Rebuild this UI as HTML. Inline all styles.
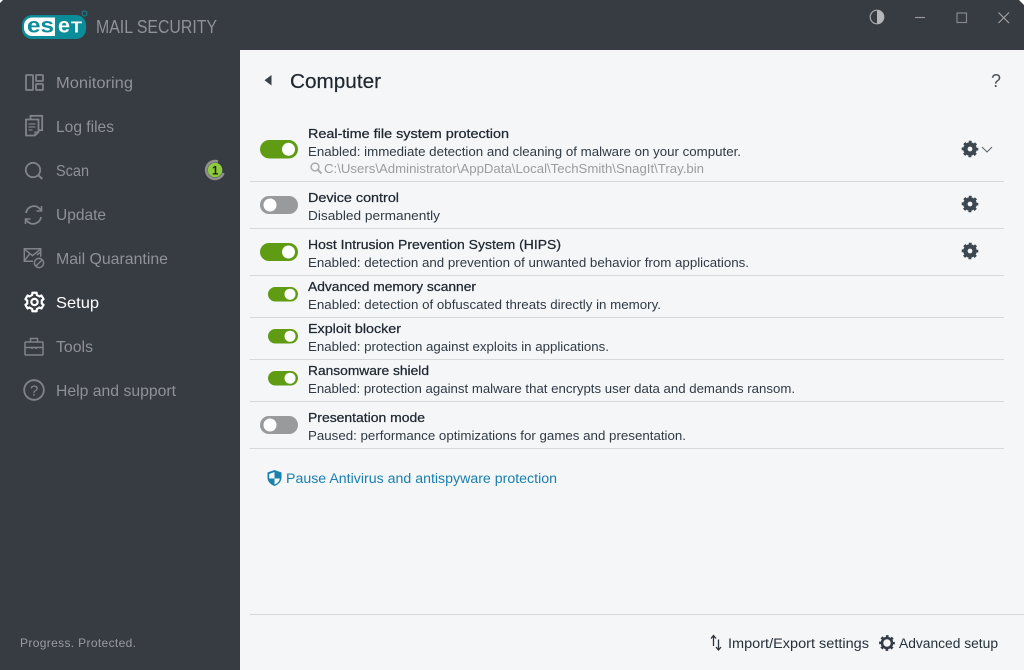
<!DOCTYPE html>
<html lang="en"><head><meta charset="utf-8"><title>ESET Mail Security</title>
<style>
html,body{margin:0;padding:0;width:1024px;height:670px;overflow:hidden;background:#f4f6f8}
svg{display:block}
text{font-family:"Liberation Sans",sans-serif;white-space:pre}
.n{font-size:16px;fill:#8f9296}
.t{font-size:13px;fill:#1f2730;font-weight:400;stroke:#1f2730;stroke-width:.25px}
.d{font-size:13px;fill:#303a44}
.i{fill:none;stroke:#808387;stroke-width:1.8}
.l{fill:#d6d8da}
</style></head><body>
<svg width="1024" height="670" viewBox="0 0 1024 670" xmlns="http://www.w3.org/2000/svg">
<defs>
<g id="gear">
<circle r="4.600" fill="none" stroke="#3d4750" stroke-width="4.400"/>
<circle r="7" fill="none" stroke="#3d4750" stroke-width="2.600" stroke-dasharray="2.750 2.750" stroke-dashoffset="1.370"/>
</g>
<path id="lobed" d="M-2.250-9.740L2.250-9.740L2.410-7.420L5.220-5.800L7.310-6.820L9.560-2.920L7.630-1.620L7.630 1.620L9.560 2.920L7.310 6.820L5.220 5.800L2.410 7.420L2.250 9.740L-2.250 9.740L-2.410 7.420L-5.220 5.800L-7.310 6.820L-9.560 2.920L-7.630 1.620L-7.630-1.620L-9.560-2.920L-7.310-6.820L-5.220-5.800L-2.410-7.420Z"/>
</defs>
<rect width="1024" height="670" fill="#f4f6f8"/>
<rect x="0" y="0" width="1024" height="50" fill="#373b42"/>
<rect x="0" y="0" width="240" height="670" fill="#373b42"/>
<path d="M0 0h3L0 3zM1024 0h-5l5 5z" fill="#fff"/>

<!-- logo -->
<rect x="22" y="15" width="64" height="24" rx="10" fill="#0b8d99"/>
<path d="M32 17.500H55V36H32a8 8 0 0 1-8-8v-2.500a8 8 0 0 1 8-8z" fill="#fff"/>
<text x="27" y="32.500" font-size="21" font-weight="700" fill="#0b8d99" textLength="27" lengthAdjust="spacingAndGlyphs">es</text>
<text x="58" y="32.500" font-size="21" font-weight="700" fill="#fff" textLength="12" lengthAdjust="spacingAndGlyphs">e</text>
<text x="71" y="32.500" font-size="16" font-weight="700" fill="#fff" textLength="11" lengthAdjust="spacingAndGlyphs">T</text>
<circle cx="84.500" cy="13.500" r="2.500" fill="none" stroke="#0b8d99" stroke-width="1"/>
<text x="96" y="33" font-size="18" fill="#8f9296" textLength="121" lengthAdjust="spacingAndGlyphs">MAIL SECURITY</text>

<!-- nav text -->
<text class="n" x="56" y="88" textLength="77" lengthAdjust="spacingAndGlyphs">Monitoring</text>
<text class="n" x="56" y="132" textLength="58" lengthAdjust="spacingAndGlyphs">Log files</text>
<text class="n" x="56" y="176" textLength="33" lengthAdjust="spacingAndGlyphs">Scan</text>
<text class="n" x="56" y="220" textLength="50" lengthAdjust="spacingAndGlyphs">Update</text>
<text class="n" x="56" y="264" textLength="112" lengthAdjust="spacingAndGlyphs">Mail Quarantine</text>
<text class="n" x="56" y="308" textLength="43" lengthAdjust="spacingAndGlyphs" style="fill:#fff">Setup</text>
<text class="n" x="56" y="352" textLength="37" lengthAdjust="spacingAndGlyphs">Tools</text>
<text class="n" x="56" y="396" textLength="120" lengthAdjust="spacingAndGlyphs">Help and support</text>
<text x="20" y="647" font-size="12" fill="#9a9da0" textLength="116" lengthAdjust="spacing">Progress. Protected.</text>

<!-- nav icons -->
<g class="i">
<rect x="26" y="75" width="7" height="15" rx=".8"/>
<rect x="36" y="75" width="7" height="6" rx=".8"/>
<rect x="36" y="84" width="7" height="6" rx=".8"/>
<path d="M30.500 119v-3.200h11.700v14.400h-3.500"/>
<path d="M26 119.500h12.500v12.500l-3.500 3.500h-9z"/>
<path d="M35 135.500v-3.500h3.500" stroke-width="1.200"/>
<path d="M28.500 124h7M28.500 127h7M28.500 130h4" stroke-width="1.200"/>
<circle cx="33" cy="170" r="7.200"/>
<path d="M38.300 175.300l4 3.600" stroke-width="2"/>
<path d="M26 213a8 8 0 0 1 13.500-4.500l2 2"/>
<path d="M41.500 206v5h-5" stroke-width="1.600"/>
<path d="M41 217a8 8 0 0 1-13.500 4.500l-2-2"/>
<path d="M25.500 224v-5h5" stroke-width="1.600"/>
<g stroke-width="1.500">
<path d="M33 261.200h-8.700v-12.400h16.400v8"/>
<path d="M24.500 249.200l8 6.500 8-6.500M24.500 260.500l5.500-7M40 252.500l-3 2.500"/>
<circle cx="39" cy="263" r="4.600"/>
<path d="M36 266l6-6"/>
</g>
<g stroke-width="1.500">
<rect x="25" y="342" width="18" height="13" rx=".8"/>
<path d="M30.500 342v-3.500h7v3.500M25 347.500h18M32 347.500v1.500M36 347.500v1.500"/>
</g>
<circle cx="34" cy="390" r="9.800"/>
</g>
<text x="30" y="395.500" font-size="15" fill="#85888c">?</text>
<g transform="translate(34.500 302) scale(.95)">
<use href="#lobed" fill="none" stroke="#fff" stroke-width="2.300" stroke-linejoin="round"/>
<circle r="3.300" fill="none" stroke="#fff" stroke-width="2.300"/>
</g>

<!-- badge -->
<path d="M223.400 173A8.900 8.900 0 1 1 218 161.600" fill="none" stroke="#8d8f90" stroke-width="2.600"/>
<circle cx="215" cy="170" r="7.300" fill="#8fcb3c"/>
<text x="212" y="174.500" font-size="11.500" font-weight="700" fill="#1a1f10">1</text>

<!-- window controls -->
<circle cx="877" cy="17" r="6.800" fill="none" stroke="#a8aaad" stroke-width="1.200"/>
<path d="M877 10.200a6.800 6.800 0 0 1 0 13.600z" fill="#b5b7ba"/>
<path d="M915 17.500h10" stroke="#96989b" stroke-width="1.200"/>
<rect x="957" y="13" width="9.500" height="9.500" fill="none" stroke="#85888c" stroke-width="1.200"/>
<path d="M998.500 12.500l10.500 10.500M1009 12.500l-10.500 10.500" stroke="#a0a2a5" stroke-width="1.200" fill="none"/>

<!-- header -->
<path d="M271.500 75v10.500l-7-5.200z" fill="#3b4149"/>
<text x="290" y="88" font-size="20" fill="#1f2730" textLength="91" lengthAdjust="spacingAndGlyphs" style="stroke:#1f2730;stroke-width:.2px">Computer</text>
<text x="991" y="87" font-size="18" fill="#4a525a" textLength="10" lengthAdjust="spacingAndGlyphs">?</text>

<!-- rows -->
<text class="t" x="308" y="138" textLength="201" lengthAdjust="spacingAndGlyphs">Real-time file system protection</text>
<text class="d" x="308" y="156" textLength="433" lengthAdjust="spacingAndGlyphs">Enabled: immediate detection and cleaning of malware on your computer.</text>
<circle cx="315" cy="167" r="3.900" fill="none" stroke="#a9abad" stroke-width="1.500"/>
<path d="M318 170l3.500 3.500" stroke="#a9abad" stroke-width="2"/>
<text x="324" y="173" font-size="13" fill="#9a9c9f" textLength="380" lengthAdjust="spacingAndGlyphs">C:\Users\Administrator\AppData\Local\TechSmith\SnagIt\Tray.bin</text>
<rect class="l" x="250" y="181" width="754" height="1"/>
<text class="t" x="308" y="202" textLength="91" lengthAdjust="spacingAndGlyphs">Device control</text>
<text class="d" x="308" y="220" textLength="132" lengthAdjust="spacingAndGlyphs">Disabled permanently</text>
<rect class="l" x="250" y="228" width="754" height="1"/>
<text class="t" x="308" y="249" textLength="253" lengthAdjust="spacingAndGlyphs">Host Intrusion Prevention System (HIPS)</text>
<text class="d" x="308" y="267" textLength="441" lengthAdjust="spacingAndGlyphs">Enabled: detection and prevention of unwanted behavior from applications.</text>
<rect class="l" x="250" y="275" width="754" height="1"/>
<text class="t" x="308" y="291" textLength="168" lengthAdjust="spacingAndGlyphs">Advanced memory scanner</text>
<text class="d" x="308" y="309" textLength="353" lengthAdjust="spacingAndGlyphs">Enabled: detection of obfuscated threats directly in memory.</text>
<rect class="l" x="250" y="317" width="754" height="1"/>
<text class="t" x="308" y="333" textLength="93" lengthAdjust="spacingAndGlyphs">Exploit blocker</text>
<text class="d" x="308" y="351" textLength="301" lengthAdjust="spacingAndGlyphs">Enabled: protection against exploits in applications.</text>
<rect class="l" x="250" y="359" width="754" height="1"/>
<text class="t" x="308" y="375" textLength="121" lengthAdjust="spacingAndGlyphs">Ransomware shield</text>
<text class="d" x="308" y="393" textLength="487" lengthAdjust="spacingAndGlyphs">Enabled: protection against malware that encrypts user data and demands ransom.</text>
<rect class="l" x="250" y="401" width="754" height="1"/>
<text class="t" x="308" y="422" textLength="117" lengthAdjust="spacingAndGlyphs">Presentation mode</text>
<text class="d" x="308" y="440" textLength="378" lengthAdjust="spacingAndGlyphs">Paused: performance optimizations for games and presentation.</text>
<rect class="l" x="250" y="448" width="754" height="1"/>

<!-- toggles -->
<rect x="260" y="140" width="38" height="18.500" rx="9.250" fill="#5f9c14"/><circle cx="288.500" cy="149.300" r="6.500" fill="#fff"/>
<rect x="260" y="196" width="38" height="18" rx="9" fill="#999a9c"/><circle cx="270" cy="205" r="6.500" fill="#fff"/>
<rect x="260" y="243" width="38" height="18" rx="9" fill="#5f9c14"/><circle cx="288.500" cy="252" r="6.500" fill="#fff"/>
<rect x="268" y="287" width="30" height="14.500" rx="7.250" fill="#5f9c14"/><circle cx="290" cy="294.200" r="5.500" fill="#fff"/>
<rect x="268" y="329" width="30" height="14.500" rx="7.250" fill="#5f9c14"/><circle cx="290" cy="336.200" r="5.500" fill="#fff"/>
<rect x="268" y="371" width="30" height="14.500" rx="7.250" fill="#5f9c14"/><circle cx="290" cy="378.200" r="5.500" fill="#fff"/>
<rect x="260" y="416" width="38" height="18" rx="9" fill="#999a9c"/><circle cx="270" cy="425" r="6.500" fill="#fff"/>

<!-- gears -->
<use href="#gear" transform="translate(970 149)"/>
<use href="#gear" transform="translate(970 204)"/>
<use href="#gear" transform="translate(970 251)"/>
<path d="M982 147l5 5 5-5" fill="none" stroke="#5b646c" stroke-width="1"/>

<!-- link -->
<path d="M274.500 470l7 2.500v5c0 4-3 7-7 8.500-4-1.500-7-4.500-7-8.500v-5z" fill="#1a80ad"/>
<path d="M274.500 472v6.500h-5.300v-4.500zM274.500 478.500h5.300c-.3 3-2.500 5-5.300 6z" fill="#f4f6f8"/>
<text x="286" y="483" font-size="13.500" fill="#1a7fae" textLength="271" lengthAdjust="spacingAndGlyphs">Pause Antivirus and antispyware protection</text>

<!-- footer -->
<rect class="l" x="250" y="614" width="774" height="1"/>
<path d="M713.500 646v-10M711 638.500l2.500-3 2.500 3" fill="none" stroke="#2b333b" stroke-width="1.300"/>
<path d="M718.500 639.500v10M716 647l2.500 3 2.500-3" fill="none" stroke="#2b333b" stroke-width="1.300"/>
<text x="728" y="648" font-size="13.500" fill="#26303a" textLength="141" lengthAdjust="spacingAndGlyphs">Import/Export settings</text>
<g transform="translate(887 643)">
<circle r="5" fill="none" stroke="#333c45" stroke-width="2.600"/>
<circle r="6.900" fill="none" stroke="#333c45" stroke-width="2" stroke-dasharray="2.710 2.710" stroke-dashoffset="1.350"/>
</g>
<text x="899" y="648" font-size="13.500" fill="#26303a" textLength="99" lengthAdjust="spacingAndGlyphs">Advanced setup</text>
</svg>
</body></html>
